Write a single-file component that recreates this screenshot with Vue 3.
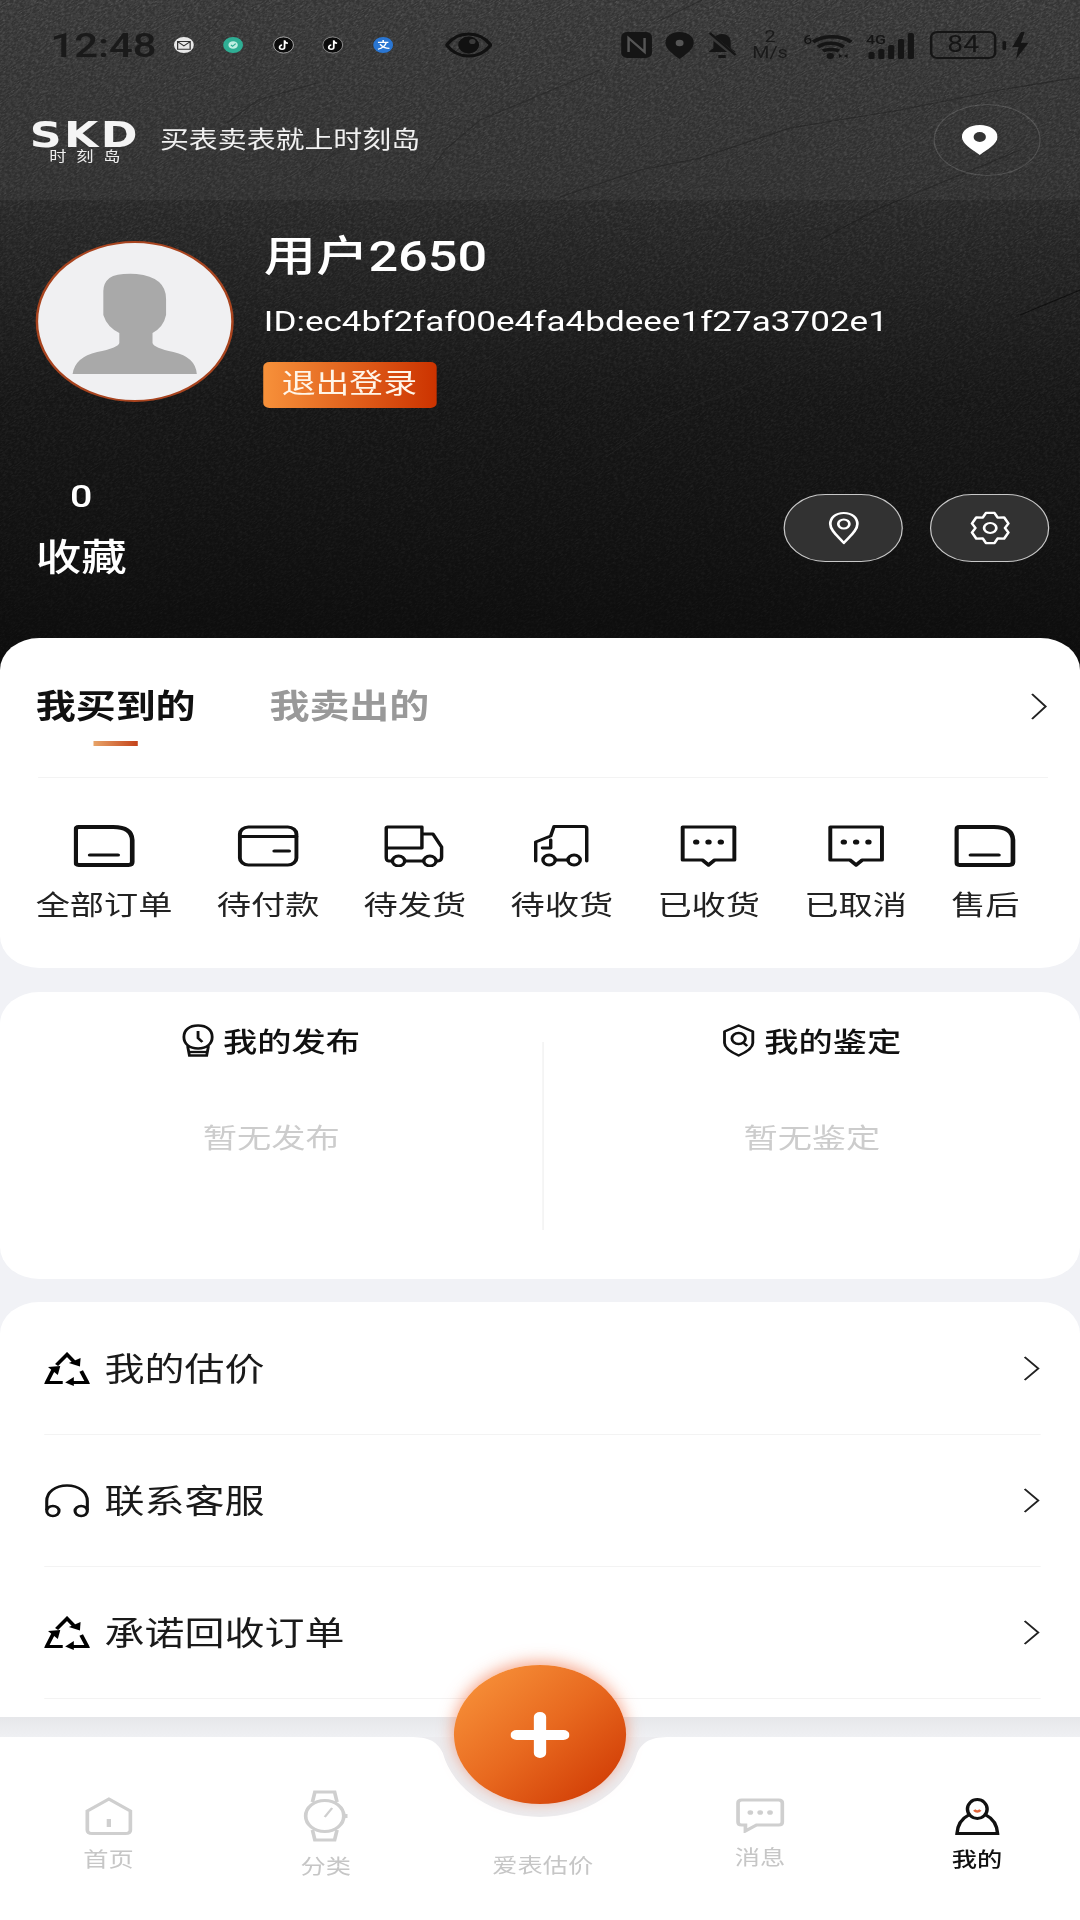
<template>
  <div class="page">
    <div class="hero">
      <svg class="texture" viewBox="0 0 1080 680" preserveAspectRatio="none">
        <defs>
          <filter id="grain" x="0" y="0" width="100%" height="100%">
            <feTurbulence type="fractalNoise" baseFrequency="0.3 0.95" numOctaves="3" seed="4" />
            <feColorMatrix type="matrix" values="0 0 0 0 0.6  0 0 0 0 0.6  0 0 0 0 0.6  1.8 0 0 0 -0.72" />
          </filter>
          <linearGradient id="fade" x1="0" y1="0" x2="0" y2="1">
            <stop offset="0" stop-color="#fff" stop-opacity="0.3" />
            <stop offset="0.5" stop-color="#fff" stop-opacity="0.14" />
            <stop offset="1" stop-color="#fff" stop-opacity="0.05" />
          </linearGradient>
          <mask id="fadeMask"><rect width="1080" height="680" fill="url(#fade)" /></mask>
        </defs>
        <g mask="url(#fadeMask)">
          <rect x="-400" y="-500" width="1900" height="1700" filter="url(#grain)" transform="rotate(-32 540 340)" />
        </g>
        <path v-for="(s, i) in scratches" :key="i" :d="s.d" :stroke="s.c" :stroke-width="s.w" fill="none" opacity="0.7" />
      </svg>

      <div class="top-strip">
        <div class="status">
          <span class="time">12:48</span>
          <div class="notes">
            <svg class="note" viewBox="0 0 20 20"><circle cx="10" cy="10" r="9.5" fill="#e8e8e8" /><path d="M4 6h12v9H4zM4 6l6 5 6-5" fill="none" stroke="#333" stroke-width="1.2" /></svg>
            <svg class="note" viewBox="0 0 20 20"><circle cx="10" cy="10" r="9.5" fill="#2fae94" /><circle cx="10" cy="10" r="4.5" fill="#bfeee2" /><path d="M8 10l1.5 1.5L12.5 8.5" fill="none" stroke="#2fae94" stroke-width="1.3" /></svg>
            <svg class="note" viewBox="0 0 20 20"><circle cx="10" cy="10" r="9.5" fill="#0b0b0b" stroke="#ccc" stroke-width="0.8" /><path d="M11 4.5v8a2.4 2.4 0 1 1-2.4-2.4M11 5c.4 1.8 1.4 2.8 3.2 3" fill="none" stroke="#fff" stroke-width="1.7" /></svg>
            <svg class="note" viewBox="0 0 20 20"><circle cx="10" cy="10" r="9.5" fill="#0b0b0b" stroke="#aaa" stroke-width="0.8" /><path d="M11 4.5v8a2.4 2.4 0 1 1-2.4-2.4M11 5c.4 1.8 1.4 2.8 3.2 3" fill="none" stroke="#fff" stroke-width="1.7" /></svg>
            <svg class="note" viewBox="0 0 20 20"><circle cx="10" cy="10" r="9.5" fill="#2a76d2" /><path d="M5 7h10M10 4v3M13 7c-1 4-4 7-8 8M7 9c2 3 5 5 9 5" fill="none" stroke="#fff" stroke-width="1.5" /></svg>
          </div>
          <svg class="eye" viewBox="0 0 38 26"><path d="M1 13C6 5 13 2 19 2s13 3 18 11c-5 8-12 11-18 11S6 21 1 13z" fill="none" stroke="#111" stroke-width="3" /><circle cx="19" cy="13" r="8.500" fill="#111" /><circle cx="22" cy="9.5" r="2.6" fill="#3a3a3a" /></svg>
          <div class="sys">
            <svg width="25" height="26" viewBox="0 0 25 26"><rect x="0" y="0" width="25" height="26" rx="5" fill="#151515" /><path d="M6 20V6l13 14V6" fill="none" stroke="#555" stroke-width="2" /></svg>
            <svg width="23" height="27" viewBox="0 0 23 27"><path d="M11.5 0C5 0 0 4 0 11c0 6 7 12 11.5 16C16 23 23 17 23 11 23 4 18 0 11.5 0z" fill="#151515" /><circle cx="11.5" cy="11" r="3.2" fill="#555" /></svg>
            <svg width="24" height="27" viewBox="0 0 24 27"><path d="M12 2c-5 0-7 4-7 8v6l-4 4h22l-4-4v-6c0-4-2-8-7-8z" fill="#151515" /><path d="M9 23h6v3H9z" fill="#151515" /><path d="M1 2l22 22" stroke="#3a3a3a" stroke-width="4" /><path d="M2 1l21 22" stroke="#151515" stroke-width="2" /></svg>
            <div class="speed"><span>2</span><span>M/s</span></div>
            <svg width="40" height="27" viewBox="0 0 40 27"><text x="0" y="12" class="sys-txt">6</text><path d="M8 10c8-7 23-7 31 0M12 15c6-5 15-5 21 0M16 19c3-2 10-2 13 0" fill="none" stroke="#151515" stroke-width="3.500" /><circle cx="22" cy="24" r="3" fill="#151515" /><path d="M29 22l3 2-3 2zM36 22l-3 2 3 2z" fill="#151515" /></svg>
            <svg width="41" height="27" viewBox="0 0 41 27"><text x="0" y="12" class="sys-txt">4G</text><rect x="2" y="20" width="5" height="7" rx="1.5" fill="#151515" /><rect x="10" y="17" width="5" height="10" rx="1.5" fill="#151515" /><rect x="18" y="13" width="5" height="14" rx="1.5" fill="#151515" /><rect x="26" y="7" width="5" height="20" rx="1.5" fill="#151515" /><rect x="34" y="1" width="5" height="26" rx="1.5" fill="#151515" /></svg>
            <div class="battery">84</div>
            <svg width="23" height="27" viewBox="0 0 23 27"><rect x="0" y="9" width="3" height="9" rx="1.5" fill="#151515" /><path d="M15 0L8 15h5l-2 12 10-16h-6l3-11z" fill="#151515" /></svg>
          </div>
        </div>
        <div class="brand-row">
          <div class="logo">
            <span class="logo-en">SKD</span>
            <span class="logo-cn">时刻岛</span>
          </div>
          <span class="slogan">买表卖表就上时刻岛</span>
          <div class="loc-btn">
            <svg class="loc-pin" width="29" height="30" viewBox="0 0 29 30"><path d="M14.5 0C6 0 0 5 0 12c0 7 9 13 14.5 18C20 25 29 19 29 12 29 5 23 0 14.5 0z" fill="#fff" /><circle cx="14.5" cy="12" r="5" fill="#333" /></svg>
          </div>
        </div>
      </div>

      <div class="profile">
        <div class="avatar">
          <svg width="157" height="157" viewBox="2 2 157 157"><path d="M60 37Q66 32 82 33Q106 36 106 58L106 74Q104 86 95 92V102Q96 107 112 111Q130 116 131 133H30Q32 116 50 111Q67 107 68 102V92Q58 86 55 74L55 50Q55 42 60 37Z" fill="#a9a9a9" /></svg>
        </div>
        <div class="info">
          <div class="name">用户2650</div>
          <div class="uid">ID:ec4bf2faf00e4fa4bdeee1f27a3702e1</div>
          <div class="logout">退出登录</div>
        </div>
      </div>

      <div class="stat-row">
        <div class="stat">
          <div class="stat-num">0</div>
          <div class="stat-label">收藏</div>
        </div>
        <div class="pills">
          <div class="pill">
            <svg width="30" height="34" viewBox="0 0 30 34"><path d="M15 2C8 2 4 7 4 13c0 7 7 13 11 19 4-6 11-12 11-19C26 7 22 2 15 2z" fill="none" stroke="#fff" stroke-width="2.200" stroke-linejoin="round" /><circle cx="15" cy="13" r="4.500" fill="none" stroke="#fff" stroke-width="2.200" /></svg>
          </div>
          <div class="pill">
            <svg width="34" height="34" viewBox="0 0 34 34"><path :d="gearPath" fill="none" stroke="#fff" stroke-width="2.200" stroke-linejoin="round" /><circle cx="17" cy="17" r="5" fill="none" stroke="#fff" stroke-width="2.200" /></svg>
          </div>
        </div>
      </div>
    </div>

    <div class="card order-card">
      <div class="tabs">
        <div class="tab-col">
          <div class="tab-on">我买到的</div>
          <div class="tab-line"></div>
        </div>
        <div class="tab-off">我卖出的</div>
        <svg class="chev top-chev" width="15" height="27" viewBox="0 0 15 27"><path d="M2 1l11 12.500L2 26" fill="none" stroke="#222" stroke-width="1.800" /></svg>
      </div>
      <div class="orders">
        <div class="order" v-for="o in orders" :key="o.label">
          <svg class="order-ico" width="50" height="42" viewBox="0 0 50 42" fill="none" stroke="#111" stroke-width="3.200" stroke-linejoin="round" stroke-linecap="round">
            <template v-if="o.icon === 'doc'">
              <path d="M4 2H32Q47 2 47.500 15V37Q47.500 40 44.500 40H4Q1.500 40 1.500 37V5Q1.500 2 4 2Z" stroke-width="3.800" />
              <path d="M13 30H36" />
            </template>
            <template v-else-if="o.icon === 'card'">
              <rect x="2" y="2" width="46" height="38" rx="7" />
              <path d="M2 11.500H48M30 26H42" />
            </template>
            <template v-else-if="o.icon === 'truck'">
              <path d="M7 36H4Q2 36 2 32V3Q2 2 3 2H31V23H2M31 9H40L47 22V32Q47 36 44 36H43M17 36H32" stroke-width="2.800" />
              <circle cx="12" cy="36" r="5" stroke-width="2.800" />
              <circle cx="37.500" cy="36" r="5" stroke-width="2.800" />
            </template>
            <template v-else-if="o.icon === 'lift'">
              <g transform="translate(3 0)">
                <path d="M0.500 36V17L12.700 11L15.400 1.500H39.800Q42 1.500 42 4V36M12.700 15V23H6M17 35H27" stroke-width="2.800" />
                <circle cx="11.400" cy="35" r="5" stroke-width="2.800" />
                <circle cx="31.700" cy="35" r="5" stroke-width="2.800" />
              </g>
            </template>
            <template v-else>
              <path d="M4 2H46V35H30L25 40L20 35H4Z" />
              <g fill="#111" stroke="none">
                <circle cx="15" cy="17" r="2.600" />
                <circle cx="25" cy="17" r="2.600" />
                <circle cx="35" cy="17" r="2.600" />
              </g>
            </template>
          </svg>
          <div class="order-label">{{ o.label }}</div>
        </div>
      </div>
    </div>

    <div class="card pub-card">
      <div class="pub-col pub-left">
        <div class="pub-title">
          <svg width="26" height="33" viewBox="0 0 26 33" fill="none" stroke="#111" stroke-width="2.300"><path d="M13 1.500C6 1.500 1.500 6 1.500 13S6 24.500 13 24.500 24.500 20 24.500 13 20 1.500 13 1.500z" /><path d="M13 7v7l3.500 4" /><path d="M4.500 22l1.500 9.500H20L21.500 22" /><path d="M6 28H20" /></svg>
          <span>我的发布</span>
        </div>
        <div class="pub-empty">暂无发布</div>
      </div>
      <div class="pub-divider"></div>
      <div class="pub-col">
        <div class="pub-title">
          <svg width="27" height="33" viewBox="0 0 27 33" fill="none" stroke="#111" stroke-width="2.300" stroke-linejoin="round"><path d="M13.500 1.500L25 7.500V19C25 24 19 28.500 13.500 31.500 8 28.500 2 24 2 19V7.500Z" /><circle cx="13.500" cy="14.500" r="5.500" /><path d="M17.500 19l3 3" /></svg>
          <span>我的鉴定</span>
        </div>
        <div class="pub-empty">暂无鉴定</div>
      </div>
    </div>

    <div class="card menu-card">
      <div class="menu-row" v-for="m in menus" :key="m.label">
        <svg v-if="m.icon === 'recycle'" class="menu-ico" width="37" height="34" viewBox="0 0 37 34" fill="none" stroke="#000" stroke-width="3.200">
          <path d="M10 13L18.500 2.500L24 9.500" />
          <path d="M20 11L29 14.500L29.500 6Z" fill="#000" stroke="none" />
          <path d="M8 16L2 30.500H15" />
          <path d="M3 15L13 14L11 23Z" fill="#000" stroke="none" />
          <path d="M30 19L35 30.500H23" />
          <path d="M24 25L17 30.500L24 34Z" fill="#000" stroke="none" />
        </svg>
        <svg v-else class="menu-ico" width="37" height="34" viewBox="0 0 37 34" fill="none" stroke="#111" stroke-width="2.500">
          <path d="M2 26V17C2 8 9 1.500 18.500 1.500S35 8 35 17V26" />
          <circle cx="7" cy="27" r="5" />
          <circle cx="30" cy="27" r="5" />
        </svg>
        <span class="menu-label">{{ m.label }}</span>
        <svg class="chev" width="15" height="25" viewBox="0 0 15 25"><path d="M2 1l11 11.500L2 24" fill="none" stroke="#222" stroke-width="1.800" /></svg>
      </div>
    </div>

    <div class="tabbar">
      <div class="tab-band"></div>
      <svg class="notch" width="212" height="82" viewBox="0 0 212 82"><path d="M0 0H212C196 0 190 4 185 16A81 82 0 0 1 27 16C22 4 16 0 0 0Z" fill="#ececef" /></svg>
      <div class="fab">
        <svg width="48" height="46" viewBox="0 0 48 46"><path d="M24 5V41M5 23H43" stroke="#fff" stroke-width="10" stroke-linecap="round" /></svg>
      </div>
      <div class="tab-items">
        <div class="tab-item" v-for="t in tabs" :key="t.label" :class="{ active: t.active }" :style="{ paddingTop: t.top + 'px' }">
          <svg v-if="t.icon === 'home'" width="39" height="38" viewBox="0 0 39 38" fill="none" stroke="#cfcfcf" stroke-width="3"><path d="M19.500 2L37 14V33Q37 36.500 33 36.500H6Q2 36.500 2 33V14Z" /><path d="M19.500 22V30" stroke-width="3.500" /></svg>
          <svg v-else-if="t.icon === 'watch'" width="37" height="52" viewBox="0 0 37 52" fill="none" stroke="#cfcfcf" stroke-width="3"><path d="M8 12L10 2H26L28 12M8 40L10 50H26L28 40" /><circle cx="18" cy="26" r="15.500" /><path d="M18 27L24 18" stroke-width="2" /><path d="M35 24V28" /></svg>
          <svg v-else-if="t.icon === 'msg'" width="40" height="35" viewBox="0 0 40 35" fill="none" stroke="#cfcfcf" stroke-width="3"><path d="M5 2H35Q38 2 38 5V24Q38 27 35 27H17L8 33V27H5Q2 27 2 24V5Q2 2 5 2Z" /><g fill="#cfcfcf" stroke="none"><circle cx="12" cy="14.500" r="2.300" /><circle cx="20" cy="14.500" r="2.300" /><circle cx="28" cy="14.500" r="2.300" /></g></svg>
          <svg v-else-if="t.icon === 'me'" width="37" height="37" viewBox="0 0 37 37" fill="none" stroke="#111" stroke-width="2.800"><ellipse cx="18.500" cy="11" rx="8" ry="9.500" /><path d="M11.500 17C5 21 2.500 27 2 35.500H35C34.500 27 32 21 25.500 17" /><path d="M16 12Q18.500 15 21 12" stroke="#e0653a" stroke-width="2.500" /></svg>
          <div v-else class="tab-blank"></div>
          <div class="tab-label">{{ t.label }}</div>
        </div>
      </div>
    </div>
  </div>
</template>

<script setup>
// 订单状态入口
const orders = [
  { label: '全部订单', icon: 'doc' },
  { label: '待付款', icon: 'card' },
  { label: '待发货', icon: 'truck' },
  { label: '待收货', icon: 'lift' },
  { label: '已收货', icon: 'chat' },
  { label: '已取消', icon: 'chat' },
  { label: '售后', icon: 'doc' }
]

const menus = [
  { label: '我的估价', icon: 'recycle' },
  { label: '联系客服', icon: 'headset' },
  { label: '承诺回收订单', icon: 'recycle' }
]

// top 是图标距离灰条的高度，每个图标高度不一样
const tabs = [
  { label: '首页', icon: 'home', top: 60 },
  { label: '分类', icon: 'watch', top: 53 },
  { label: '爱表估价', icon: '', top: 104 },
  { label: '消息', icon: 'msg', top: 61 },
  { label: '我的', icon: 'me', top: 61, active: true }
]

// 六齿齿轮的轮廓
const gearPath = (() => {
  const pts = []
  for (let i = 0; i < 6; i++) {
    const a = -90 + i * 60
    for (const [d, r] of [[-13, 15.5], [13, 15.5], [30, 12]]) {
      const rad = ((a + d) * Math.PI) / 180
      pts.push((17 + r * Math.cos(rad)).toFixed(1) + ' ' + (17 + r * Math.sin(rad)).toFixed(1))
    }
  }
  return 'M' + pts.join('L') + 'Z'
})()

// 背景上的划痕
const scratches = [
  { d: 'M560 197L640 170L700 158L790 128L900 110L1000 90L1080 77', c: '#1c1c1c', w: 1.2 },
  { d: 'M227 123L258 100L317 83', c: '#202020', w: 1 },
  { d: 'M420 185L445 150L480 120L540 95L600 70', c: '#1f1f1f', w: 1 },
  { d: 'M661 20L702 0', c: '#202020', w: 1 },
  { d: 'M180 60L238 0', c: '#222', w: 0.8 },
  { d: 'M300 180L345 145L420 112', c: '#202020', w: 0.8 },
  { d: 'M606 457L660 420L757 380L830 350L930 327', c: '#2a2a2a', w: 0.8 },
  { d: 'M820 240L880 208L960 175L1020 150', c: '#1d1d1d', w: 1 },
  { d: 'M340 250L400 200', c: '#333', w: 0.8 },
  { d: 'M0 260L60 215', c: '#2c2c2c', w: 0.8 },
  { d: 'M1020 315L1080 290', c: '#080808', w: 1.2 }
]
</script>

<style scoped>
/* 截图本身是横向拉伸过的，整页按 878 宽布局后再拉到 1080 */
.page {
  position: relative;
  width: 878px;
  height: 1920px;
  overflow: hidden;
  background: #f1f2f6;
  transform: scaleX(1.23007);
  transform-origin: 0 0;
  font-family: Roboto, "Noto Sans CJK SC", sans-serif;
  color: #111;
}

.hero {
  position: relative;
  height: 680px;
  margin-bottom: -42px;
  color: #fff;
  background: linear-gradient(180deg, #2e2e2e 0, #282828 200px, #161616 400px, #0c0c0c 680px);
}

.texture {
  position: absolute;
  top: 0;
  left: 0;
  width: 100%;
  height: 100%;
}

.top-strip {
  position: relative;
  height: 200px;
  background: rgba(255, 255, 255, 0.035);
}

.status {
  display: flex;
  align-items: center;
  height: 90px;
  padding: 0 40px 0 41px;
}

.time {
  width: 100px;
  font-size: 34px;
  font-weight: 500;
  color: #1a1a1a;
}

.notes {
  display: flex;
  gap: 23.4px;
}

.note {
  width: 17px;
  height: 20px;
}

.eye {
  width: 38px;
  height: 26px;
  margin-left: 42px;
}

.sys {
  display: flex;
  align-items: center;
  gap: 11px;
  margin-left: auto;
}

.sys svg {
  overflow: visible;
}

.sys-txt {
  font-size: 13px;
  font-weight: 500;
  fill: #151515;
}

.speed {
  display: flex;
  flex-direction: column;
  align-items: center;
  width: 32px;
  font-size: 16px;
  line-height: 16px;
  color: #1a1a1a;
}

.battery {
  width: 54px;
  height: 28px;
  box-sizing: border-box;
  margin-right: -6px;
  border: 2px solid #151515;
  border-radius: 6px;
  font-size: 23px;
  line-height: 24px;
  text-align: center;
  color: #151515;
}

.brand-row {
  display: flex;
  align-items: center;
  height: 100px;
  padding-left: 25px;
}

.logo {
  display: flex;
  flex-direction: column;
  align-items: center;
  width: 88px;
}

.logo-en {
  font-family: "DejaVu Sans", sans-serif;
  font-weight: 700;
  font-size: 36px;
  line-height: 36px;
  height: 30px;
  letter-spacing: 2px;
  color: #f4f4f4;
}

.logo-cn {
  font-family: "Noto Sans CJK SC", sans-serif;
  font-size: 14px;
  line-height: 16px;
  letter-spacing: 8px;
  margin-right: -8px;
  color: #eee;
}

.slogan {
  margin: -4px 0 0 17px;
  font-size: 23.500px;
  color: #f0f0f0;
}

.loc-btn {
  display: flex;
  align-items: center;
  justify-content: center;
  width: 87px;
  height: 72px;
  box-sizing: border-box;
  margin-left: auto;
  margin-right: 32px;
  border: 1px solid rgba(255, 255, 255, 0.14);
  border-radius: 50%;
}

.loc-pin {
  margin-right: 12px;
}

.profile {
  position: relative;
  display: flex;
  gap: 25px;
  padding: 41px 0 0 28.500px;
}

.avatar {
  width: 161px;
  height: 161px;
  box-sizing: border-box;
  border: 2px solid #a8441f;
  border-radius: 50%;
  background: #f0f0f2;
  overflow: hidden;
}

.info {
  margin-top: -6px;
}

.name {
  font-size: 42.500px;
  line-height: 44px;
  font-weight: 500;
}

.uid {
  margin-top: 23px;
  font-size: 28.500px;
  line-height: 40px;
  white-space: nowrap;
}

.logout {
  width: 141px;
  height: 46px;
  margin: 20px 0 0 -1px;
  border-radius: 5px;
  background: linear-gradient(90deg, #f7913a, #cc3300);
  font-size: 27.500px;
  line-height: 44px;
  text-align: center;
  color: #fff5e8;
}

.stat-row {
  position: relative;
  display: flex;
  justify-content: space-between;
  align-items: flex-start;
  margin-top: 68px;
  padding: 0 25px 0 29px;
}

.stat {
  width: 74px;
  text-align: center;
}

.stat-num {
  font-size: 32px;
  line-height: 40px;
  font-weight: 500;
}

.stat-label {
  margin-top: 18px;
  font-size: 37px;
  line-height: 50px;
  font-weight: 500;
}

.pills {
  display: flex;
  gap: 22px;
  margin-top: 18px;
}

.pill {
  display: flex;
  align-items: center;
  justify-content: center;
  width: 97px;
  height: 68px;
  box-sizing: border-box;
  border: 1px solid #c8c8c8;
  border-radius: 34px;
  background: #323232;
}

.card {
  position: relative;
  margin-bottom: 24px;
  border-radius: 32px;
  background: #fff;
}

.order-card {
  height: 330px;
}

.tabs {
  display: flex;
  align-items: flex-start;
  margin: 0 26px 0 31px;
  padding: 49px 0 31px;
  border-bottom: 1px solid #f3f3f3;
}

.tab-col {
  display: flex;
  flex-direction: column;
  align-items: center;
  margin-left: -2px;
}

.tab-on,
.tab-off {
  font-size: 32.500px;
  line-height: 40px;
  font-weight: 700;
}

.tab-off {
  margin-left: 60px;
  color: #999;
}

.tab-line {
  width: 36px;
  height: 5px;
  margin-top: 14px;
  background: linear-gradient(90deg, #e8a468, #c4421a);
}

.chev {
  margin-left: auto;
}

.top-chev {
  margin-top: 6px;
}

.orders {
  display: flex;
  gap: 36px;
  padding: 47px 0 0 29px;
}

.order {
  display: flex;
  flex-direction: column;
  align-items: center;
}

.order-ico {
  display: block;
}

.order-label {
  margin-top: 21px;
  font-size: 27.800px;
  line-height: 36px;
  white-space: nowrap;
  color: #222;
}

.pub-card {
  display: flex;
  height: 287px;
  margin-bottom: 23px;
}

.pub-col {
  flex: 1;
  padding-top: 28px;
  text-align: center;
}

.pub-left {
  flex: 0 0 441px;
}

.pub-title {
  display: flex;
  align-items: center;
  justify-content: center;
  gap: 7px;
  height: 40px;
  font-size: 27.800px;
  font-weight: 500;
}

.pub-empty {
  margin-top: 59px;
  font-size: 27.800px;
  line-height: 40px;
  color: #ccc;
}

.pub-divider {
  width: 1px;
  height: 188px;
  margin-top: 50px;
  background: #efefef;
}

.menu-card {
  height: 459px;
  margin-bottom: 0;
  padding: 1px 32px 0 36px;
}

.menu-row {
  display: flex;
  align-items: center;
  height: 131px;
  border-bottom: 1px solid #f3f3f3;
}

.menu-ico {
  flex-shrink: 0;
}

.menu-label {
  margin: 0 0 5px 12px;
  font-size: 32.500px;
  color: #1a1a1a;
}

.tabbar {
  position: absolute;
  left: 0;
  right: 0;
  bottom: 0;
  height: 203px;
  background: #fff;
}

.tab-band {
  height: 20px;
  background: linear-gradient(180deg, #e6e7ea, #eff0f3);
}

.notch {
  position: absolute;
  left: 333px;
  top: 20px;
}

.fab {
  position: absolute;
  left: 369px;
  top: -52px;
  display: flex;
  align-items: center;
  justify-content: center;
  width: 140px;
  height: 139px;
  border-radius: 50%;
  background: linear-gradient(135deg, #fa983e, #e8691f 50%, #cc3300);
  box-shadow: 0 -3px 14px rgba(240, 105, 60, 0.6);
}

.tab-items {
  display: flex;
}

.tab-item {
  flex: 0 0 176.500px;
  display: flex;
  flex-direction: column;
  align-items: center;
}

.tab-label {
  margin-top: 10px;
  font-size: 20.500px;
  line-height: 30px;
  color: #c6c6c6;
}

.tab-item.active .tab-label {
  color: #111;
  font-weight: 500;
}

.tab-blank {
  height: 0;
}
</style>

<style>
html, body {
  margin: 0;
  background: #fff;
}
</style>
